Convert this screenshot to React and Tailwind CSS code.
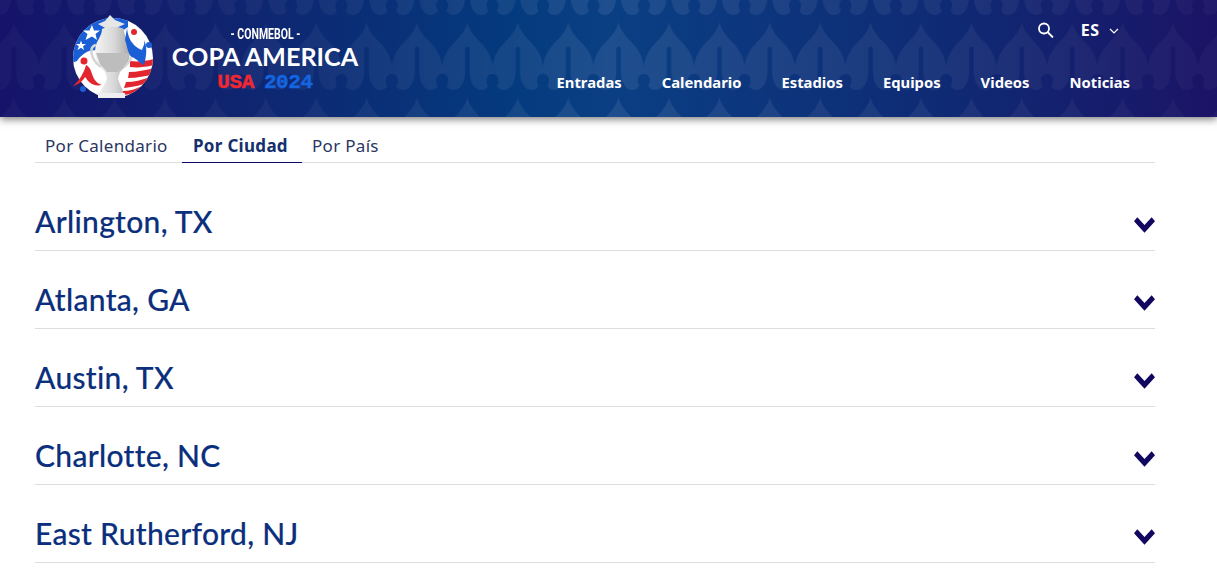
import React from "react";

const nav = ["Entradas", "Calendario", "Estadios", "Equipos", "Videos", "Noticias"];
const cities = ["Arlington, TX", "Atlanta, GA", "Austin, TX", "Charlotte, NC", "East Rutherford, NJ"];

function Pattern() {
  const drop = "M25.2 0 C27 8 32 14 38 20 C45 27 50.4 36 50.4 46 L50.4 52 C46.5 52 44.4 55 44.4 58 C44.4 62 46 63 46 64 C44 67 42 68 39 68 C33 68 28 62 27.4 50 L27.4 26 Q25.2 23 23 26 L23 50 C22.4 62 17.4 68 11.4 68 C8.4 68 6.4 67 4.4 64 C4.4 63 6 62 6 58 C6 55 3.9 52 0 52 L0 46 C0 36 5.4 27 12.4 20 C18.4 14 23.4 8 25.2 0Z";
  return (
    <svg className="absolute inset-0 w-full h-full pointer-events-none" aria-hidden="true">
      <defs>
        <pattern id="drops" x="-11.4" y="22" width="50.4" height="75" patternUnits="userSpaceOnUse">
          <path d={drop} fill="#ffffff" />
        </pattern>
        <linearGradient id="fade">
          <stop offset="0" stopColor="#fff" stopOpacity="0.03" />
          <stop offset="0.25" stopColor="#fff" stopOpacity="0.045" />
          <stop offset="0.5" stopColor="#fff" stopOpacity="0.085" />
          <stop offset="0.8" stopColor="#fff" stopOpacity="0.055" />
          <stop offset="1" stopColor="#fff" stopOpacity="0.03" />
        </linearGradient>
        <mask id="fademask"><rect width="100%" height="100%" fill="url(#fade)" /></mask>
      </defs>
      <rect width="100%" height="100%" fill="url(#drops)" mask="url(#fademask)" />
    </svg>
  );
}

function Logo() {
  return (
    <svg width="82" height="86" viewBox="0 0 82 86" className="shrink-0" aria-hidden="true">
      <defs>
        <clipPath id="disc"><circle cx="41" cy="43" r="40" /></clipPath>
        <linearGradient id="cup" x1="0" x2="1" y1="0" y2="0">
          <stop offset="0" stopColor="#f4f4f4" />
          <stop offset="0.55" stopColor="#d8d8d8" />
          <stop offset="1" stopColor="#a8a8a8" />
        </linearGradient>
      </defs>
      <g clipPath="url(#disc)">
        <rect width="82" height="86" fill="#ffffff" />
        <path d="M0 0H56 V12 L30 30 L28 36 C20 34 12 36 5 46 L0 48Z" fill="#1a5fd6" />
        <path d="M58 46 C66 47 74 46 82 44 L82 50 C74 52 66 53 58 52Z" fill="#e3262e" />
        <path d="M57 57 C66 57 74 55 82 53 L82 59 C74 61 66 63 56 63Z" fill="#e3262e" />
        <path d="M54 67 C62 67 70 65 78 62 L78 67 C70 70 62 72 52 73Z" fill="#e3262e" />
        <path d="M50 76 C58 76 64 74 70 71 L62 78 C58 79 54 80 50 80Z" fill="#e3262e" />
      </g>
      <polygon points="20,10 22,15.500 28,15.500 23.500,19 25,25 20,21.500 13.500,25 15.500,19 11,15.500 17.500,15.500" fill="#fff" />
      <polygon points="9,25.500 10.200,29 14,29 11,31.200 12,35 9,32.800 5.500,35 6.800,31.200 4,29 7.800,29" fill="#fff" />
      <path d="M26 9 L33 6 L38 0 L43 5 L53 9 L44 13 L35 14Z" fill="#e6e6e6" />
      <path d="M30 14 C36 11 46 11 52 14 C52 20 55 24 57 30 C60 42 55 51 48 57 L46 63 C47 69 51 74 53 83 L26 83 C28 74 34 69 35 63 L33 57 C26 51 21 42 24 30 C26 24 30 20 30 14Z" fill="url(#cup)" />
      <path d="M24 30 C15 32 20 46 29 52 M57 28 C65 27 62 44 52 52" fill="none" stroke="#d4d4d4" strokeWidth="2.500" />
      <path d="M24 38 L58 38 L54 49 L46 57 L35 57 L28 49Z" fill="#bdbdbd" />
      <rect x="26" y="78" width="27" height="5" fill="#efefef" />
      <circle cx="62" cy="17" r="3" fill="#e3262e" />
      <path d="M55 13 C56 25 62 32 70 35 C72 30 73 28 72 25 C75 30 75 40 72 50 C68 48 66 45 60 42 C56 40 55 30 53 25Z" fill="#1a5fd6" />
      <circle cx="77" cy="30" r="3" fill="#1a5fd6" />
      <circle cx="12" cy="46" r="3.500" fill="#e3262e" />
      <path d="M14 50 C22 54 18 66 30 70 C20 72 16 66 13 62 C11 66 6 70 1 71 C7 66 12 58 14 50Z" fill="#e3262e" />
      <circle cx="11" cy="74" r="3" fill="#1a5fd6" />
    </svg>
  );
}

export default function App() {
  return (
    <div className="min-h-[579px] bg-white font-['Noto_Sans',sans-serif]">
      <header className="relative h-[117px] bg-[linear-gradient(90deg,#15136a_0%,#10236f_18%,#043a7e_42%,#0a3f84_50%,#0f2a74_78%,#1b1366_100%)] shadow-[0_2px_8px_rgba(0,0,0,0.55)] flex justify-between pl-[72px] pr-[87px]">
        <Pattern />
        <div className="relative flex items-start pt-[15px]">
          <Logo />
          <div className="ml-[18px] w-[186px] pt-[11px] flex flex-col items-center text-white">
            <div className="font-['Roboto',sans-serif] font-bold text-[14px] leading-[16px] whitespace-nowrap scale-x-[0.75]">- CONMEBOL -</div>
            <div className="font-['Lato',sans-serif] font-bold text-[25.200px] leading-[27px] whitespace-nowrap mt-[1px]">COPA AMERICA</div>
            <div className="font-['Liberation_Mono',monospace] font-bold text-[21px] leading-[22px] mt-[2px] whitespace-nowrap tracking-[-0.4px] pl-[1px] pr-[1px] [-webkit-text-stroke:0.4px]">
              <span className="text-[#f0282f]">USA</span>
              <span className="text-[#1465e0] ml-[10px]">2024</span>
            </div>
          </div>
        </div>
        <div className="relative flex flex-col items-end">
          <div className="flex items-center mt-[22px] pr-[8px] text-white h-[16px]">
            <svg width="16" height="16" viewBox="0 0 16 16" fill="none" stroke="currentColor" strokeWidth="1.800" className="-ml-[1px]" aria-hidden="true">
              <circle cx="6" cy="6.500" r="5" />
              <path d="M9.500 10 L15 15.500" />
            </svg>
            <span className="ml-[27px] font-bold text-[16px] leading-[18px] tracking-[0.5px]">ES</span>
            <svg width="16" height="16" viewBox="0 0 24 24" fill="none" stroke="currentColor" strokeWidth="1.800" className="ml-[6.500px] mt-[1px]" aria-hidden="true">
              <path d="m6 9 6 6 6-6" />
            </svg>
          </div>
          <nav className="flex gap-[40px] mt-[35px] text-white text-[14.800px] leading-[18px] font-bold">
            {nav.map((n) => <a key={n} className="whitespace-nowrap">{n}</a>)}
          </nav>
        </div>
      </header>

      <main className="w-[1120px] ml-[35px]">
        <div className="flex h-[46px] border-b border-[#dddddd] text-[#2a3560] text-[17px] tracking-[0.3px]">
          <button className="w-[147px] text-left pl-[10px] pt-[12px]">Por Calendario</button>
          <button className="w-[120px] h-[46px] text-left pl-[11px] pt-[12px] font-bold text-[#15306e] border-b border-[#0d0a6b]">Por Ciudad</button>
          <button className="text-left pl-[10px] pt-[12px]">Por País</button>
        </div>
        {cities.map((c, i) => (
          <div key={c} className={i === 0 ? "h-[88px] pt-[29px] border-b border-[#dddddd] flex items-center justify-between" : "h-[78px] pt-[19px] border-b border-[#dddddd] flex items-center justify-between"}>
            <h2 className="font-['Lato',sans-serif] font-medium text-[30px] leading-[36px] tracking-[0.3px] text-[#0b2f7c] [-webkit-text-stroke:0.15px]">{c}</h2>
            <svg width="21" height="16" viewBox="0 0 22 16" className="mt-[8px]" aria-hidden="true">
              <path d="M0 4 L3.500 0 L11 8 L18.500 0 L22 4 L11 16Z" fill="#12075f" />
            </svg>
          </div>
        ))}
      </main>
    </div>
  );
}
